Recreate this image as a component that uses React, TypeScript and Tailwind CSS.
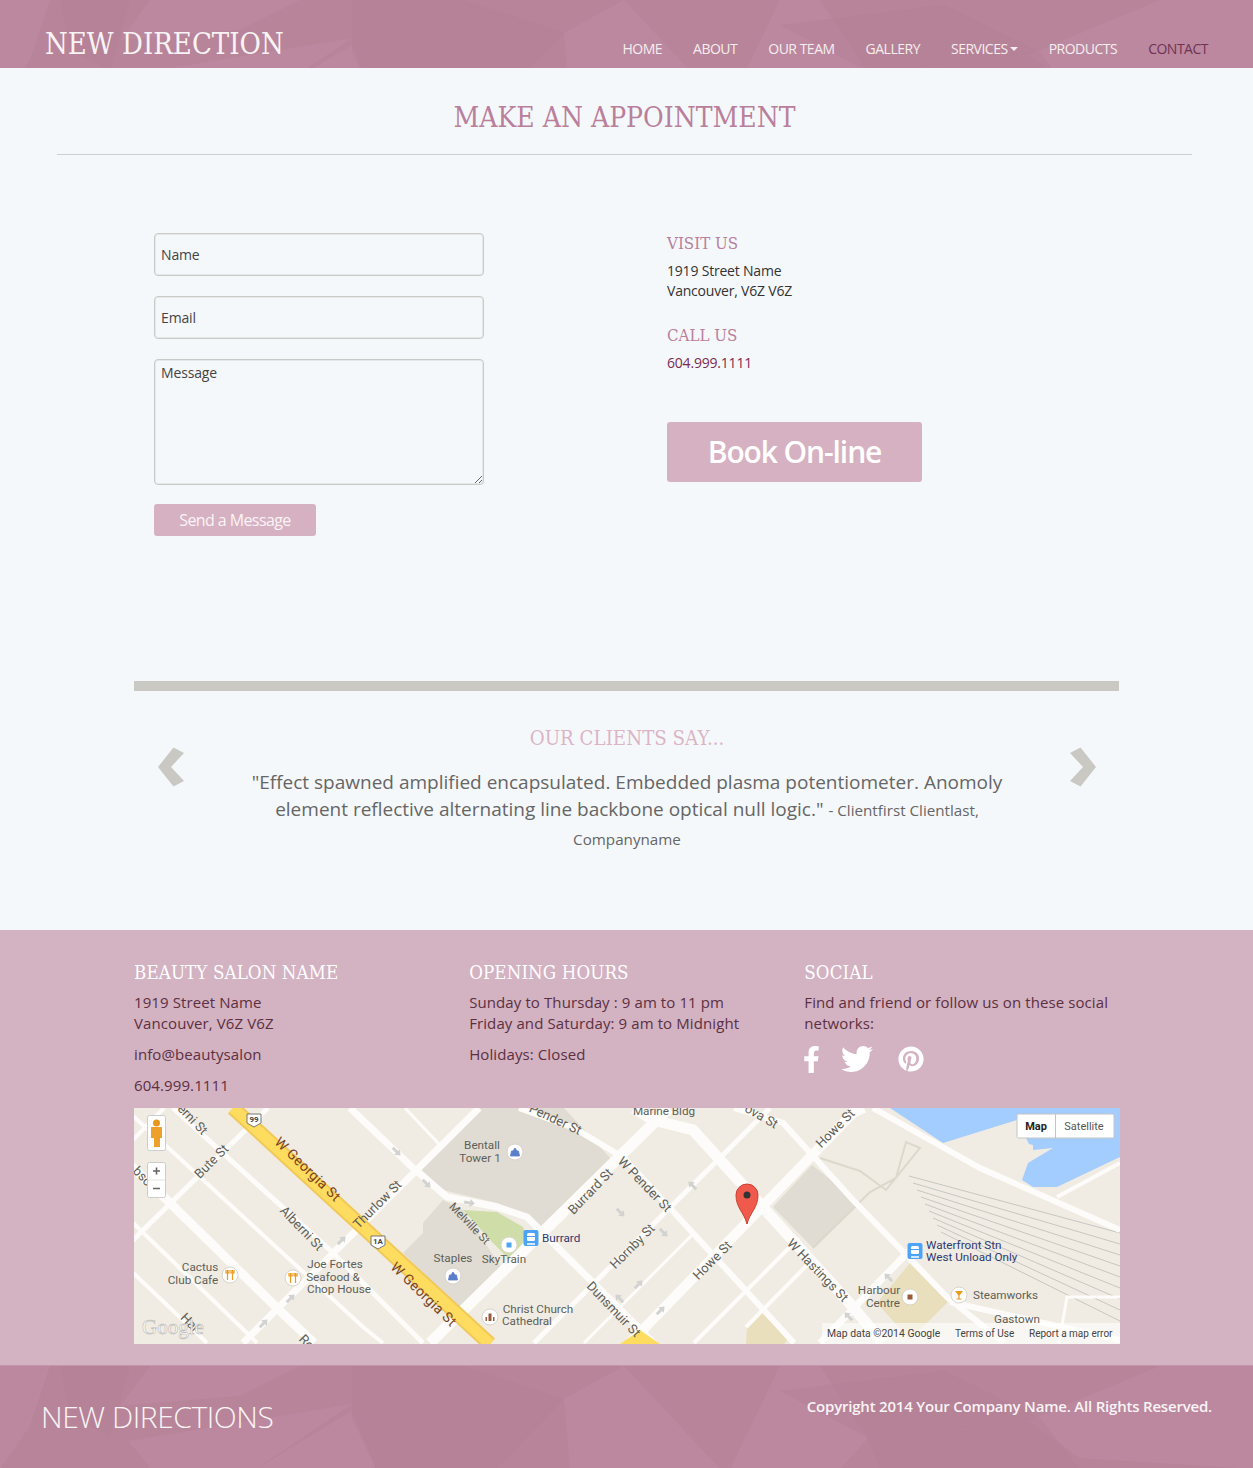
import { FaFacebookF, FaTwitter, FaPinterest } from 'react-icons/fa';

const slab = 'font-["DejaVu_Serif",serif] font-stretch-condensed';

// faceted backdrop shared by the top bar and the bottom band
const LIGHT = [
  '0,0 50,0 30,60 0,103',
  '128,75 352,38 256,103 152,103',
  '352,45 376,103 256,103',
  '564,33 624,0 720,103 570,103',
  '780,0 820,0 868,72 840,103 730,103',
  '1028,55 1160,0 1253,0 1253,103 1080,92',
  '150,0 300,0 240,30 120,40',
];
const DARK = [
  '60,0 130,0 110,70 70,50',
  '352,0 464,0 564,33 496,103 376,103 352,52',
  '780,25 944,5 1040,52 868,72',
  '868,72 1040,52 1080,103 880,103',
];

function Facets() {
  return (
    <svg className="absolute inset-0 h-full w-full" viewBox="0 0 1253 103" preserveAspectRatio="xMidYMin slice">
      {LIGHT.map((p) => <polygon key={p} points={p} fill="#c08da5" opacity="0.55" />)}
      {DARK.map((p) => <polygon key={p} points={p} fill="#b27f94" opacity="0.35" />)}
    </svg>
  );
}

function Chevron({ flip }: { flip?: boolean }) {
  return (
    <svg width="27" height="40" viewBox="0 0 27 40" className={flip ? '-scale-x-100' : ''}>
      <polygon points="15.5,0.5 26,6 13,20 26,34 15.5,39.5 0,20" fill="#c9c8c3" />
    </svg>
  );
}

const ROADS: [string, number][] = [
  ['-64,0 33,92 143,200 180,235', 9],
  ['-10,0 29,35 229,219 249,235', 4],
  ['39,0 196,142 289,235', 5],
  ['-4,112 113,225 123,235', 4],
  ['-4,162 73,235', 4],
  ['109,235 345,0', 7],
  ['-4,135 134,0', 5],
  ['-4,35 30,0', 4],
  ['216,0 279,60 313,89 363,99 393,109 409,125 520,235', 7],
  ['271,0 305,36', 3],
  ['296,235 535,0', 11],
  ['400,235 636,0', 5],
  ['495,236 719,5 730,0', 10],
  ['612,219 680,150', 4],
  ['686,235 776,142', 7],
  ['385,0 440,20 490,50 660,235', 6],
  ['500,0 519,12 559,22 719,199 749,235', 11],
  ['600,0 649,15 719,92 813,189 870,235', 6],
  ['739,0 846,60 986,122', 6],
  ['816,194 986,232', 6],
  ['923,89 986,55', 4],
  ['925,235 933,189 986,189', 3],
  ['560,235 665,130', 4],
  ['450,235 560,125', 3],
];

const ARROWS: [number, number, number][] = [
  [263, 44, 225], [293, 76, 225], [336, 95, 190], [208, 132, 135], [157, 190, 135],
  [130, 215, 135], [487, 105, 225], [558, 77, 45], [485, 190, 45], [530, 125, 225],
  [505, 176, 135], [527, 202, 135], [754, 169, 45], [714, 208, 45],
];

// [text, x, y, rotation]
const STREETS: [string, number, number, number][] = [
  ['erni St', 58, 12, 46], ['Bute St', 78, 54, -45], ['Alberni St', 167, 121, 46], ['bso', 8, 69, 46],
  ['Thurlow St', 244, 97, -45], ['Pender St', 421, 12, 25],
  ['ova St', 627, 9, 30], ['Howe St', 702, 21, -45], ['Burrard St', 457, 84, -46],
  ['W Pender St', 510, 77, 46], ['Hornby St', 499, 139, -45],
  ['Howe St', 579, 153, -45], ['W Hastings St', 683, 163, 46], ['Dunsmuir St', 479, 202, 46],
  ['Hal', 55, 215, 46], ['Ro', 172, 235, 46],
];

const PLACES: [string, number, number][] = [
  ['Marine Bldg', 530, 4], ['Cactus', 66, 160], ['Club Cafe', 59, 173], ['Joe Fortes', 201, 157],
  ['Seafood &', 199, 170], ['Chop House', 205, 182], ['Bentall', 348, 38], ['Tower 1', 346, 51],
  ['Staples', 319, 151], ['SkyTrain', 370, 152], ['Christ Church', 404, 202], ['Cathedral', 393, 214],
  ['Harbour', 745, 183], ['Centre', 749, 196], ['Gastown', 883, 212],
];

function Poi({ x, y, kind }: { x: number; y: number; kind: 'food' | 'shop' | 'dot' | 'church' | 'box' | 'bar' }) {
  return (
    <g transform={`translate(${x} ${y})`}>
      <circle r="8" fill="#fff" stroke="#d8d4ca" />
      {kind === 'food' && <path d="M-2.5 -5v10M2.5 -5v10M-4 -5v3h3v-3M1 -5v3h3v-3" stroke="#ee9a1c" strokeWidth="1.2" fill="none" />}
      {kind === 'shop' && <path d="M-4.5 4L-3.5 -1H3.5L4.5 4ZM-2 -1L0 -4L2 -1" fill="#5b7fc9" stroke="#5b7fc9" strokeWidth="0.8" />}
      {kind === 'dot' && <rect x="-2.5" y="-2.5" width="5" height="5" fill="#4da3f5" />}
      {kind === 'church' && <path d="M-4.5 4V0H-3V4ZM-1.5 4V-3.5H1.5V4ZM3 4V0H4.5V4Z" fill="#9a5a3a" />}
      {kind === 'box' && <rect x="-2.5" y="-2.5" width="5" height="5" fill="#9a5a3a" />}
      {kind === 'bar' && <path d="M-4 -4H4L0.6 0.5V3.5H2.5V4.5H-2.5V3.5H-0.6V0.5Z" fill="#ee9a1c" />}
    </g>
  );
}

function Transit({ x, y }: { x: number; y: number }) {
  return (
    <g>
      <rect x={x - 7.5} y={y - 8} width="15" height="16" rx="2" fill="#4da3f5" />
      <rect x={x - 4} y={y - 5} width="8" height="8" rx="1.5" fill="#fff" />
      <path d={`M${x - 4} ${y - 1.5}h8`} stroke="#4da3f5" strokeWidth="1" />
      <path d={`M${x - 4} ${y + 6}h8`} stroke="#fff" strokeWidth="1.5" />
    </g>
  );
}

function CityMap() {
  return (
    <svg width="986" height="236" viewBox="0 0 986 236" className="block font-['Roboto',sans-serif]">
      <rect width="986" height="236" fill="#f0ece3" />
      <polygon points="756,0 809,35 883,12 895,36 899,37 899,42 919,40 894,55 888,72 899,79 923,79 986,49 986,0" fill="#a3ccff" />
      <polygon points="343,0 286,60 309,82 363,95 393,109 408,122 478,52 430,0" fill="#e0dcd3" />
      <polygon points="309,92 289,115 289,125 269,145 326,202 369,162 329,102" fill="#e0dcd3" />
      <polygon points="329,102 363,104 389,119 393,129 376,152 359,135" fill="#cfdea8" />
      <polygon points="678,57 726,95 679,140 639,99" fill="#e0dcd3" />
      <polygon points="776,155 814,194 776,232 743,195" fill="#e9dfbd" />
      <polygon points="631,202 656,229 650,236 612,236 613,219" fill="#e9dfbd" />

      {[0, 1, 2, 3, 4, 5, 6, 7, 8].map((i) => (
        <line key={i} x1={775 + i * 4} y1={68 + i * 7} x2="986" y2={125 + i * 11} stroke="#c6c6c1" strokeWidth="1" />
      ))}
      <polyline points="686,50 726,63 752,82 786,40 772,34 762,70 736,84 679,140" fill="none" stroke="#dcd8cc" strokeWidth="2" />

      {ROADS.map(([pts, w]) => (
        <polyline key={pts} points={pts} fill="none" stroke="#fdfcfa" strokeWidth={w} />
      ))}

      <line x1="99" y1="0" x2="356" y2="236" stroke="#f0c95a" strokeWidth="15" />
      <line x1="99" y1="0" x2="356" y2="236" stroke="#fedc5f" strokeWidth="11" />
      <polygon points="486,236 506,222 526,236" fill="#fedc5f" />

      {ARROWS.map(([x, y, r]) => (
        <path key={`${x}-${y}`} d="M-5 0L0 -4V-1.5H6V1.5H0V4Z" fill="#d2d2d0" transform={`translate(${x} ${y}) rotate(${r})`} />
      ))}

      {STREETS.map(([t, x, y, r]) => (
        <text key={`${t}-${x}`} x={x} y={y} textAnchor="middle" dominantBaseline="middle" fontSize="13" fill="#5f5f58" transform={`rotate(${r} ${x} ${y})`}>{t}</text>
      ))}
      <text x="335" y="116" textAnchor="middle" dominantBaseline="middle" fontSize="11.5" fill="#5f5f58" transform="rotate(46 335 116)">Melville St</text>
      {PLACES.map(([t, x, y]) => (
        <text key={t} x={x} y={y} textAnchor="middle" dominantBaseline="middle" fontSize="11.7" fill="#5f5f58">{t}</text>
      ))}
      <text x="173" y="62" textAnchor="middle" dominantBaseline="middle" fontSize="14" letterSpacing="0.4" fill="#7a4420" transform="rotate(44 173 62)">W Georgia St</text>
      <text x="289" y="187" textAnchor="middle" dominantBaseline="middle" fontSize="14" letterSpacing="0.4" fill="#7a4420" transform="rotate(44 289 187)">W Georgia St</text>

      <g>
        <path d="M113 6h14v9l-7 4l-7-4z" fill="#fff" stroke="#777" />
        <text x="120" y="14" textAnchor="middle" fontSize="8" fontWeight="700" fill="#444">99</text>
        <path d="M237 128h14v9l-7 4l-7-4z" fill="#fff" stroke="#777" />
        <text x="244" y="136" textAnchor="middle" fontSize="8" fontWeight="700" fill="#444">1A</text>
      </g>

      <Poi x={96} y={167} kind="food" />
      <Poi x={159} y={170} kind="food" />
      <Poi x={381} y={44} kind="shop" />
      <Poi x={319} y={168} kind="shop" />
      <Poi x={375} y={137} kind="dot" />
      <Poi x={356} y={209} kind="church" />
      <Poi x={776} y={189} kind="box" />
      <Poi x={825} y={187} kind="bar" />
      <Transit x={397} y={130} />
      <Transit x={781} y={143} />
      <text x="408" y="134" fontSize="11.7" fill="#2e3a72">Burrard</text>
      <text x="792" y="141" fontSize="11.7" fill="#2e3a72">Waterfront Stn</text>
      <text x="792" y="153" fontSize="11.7" fill="#2e3a72">West Unload Only</text>
      <text x="839" y="191" fontSize="11.7" fill="#5f5f58">Steamworks</text>

      <path d="M613 116C610 104 602 100 602 87A11 11 0 1 1 624 87C624 100 616 104 613 116Z" fill="#f05a4c" stroke="#c8402f" />
      <circle cx="613" cy="87" r="3.5" fill="#333" />

      <rect x="13.5" y="7.5" width="18" height="35" rx="2" fill="#fff" stroke="#ccc" />
      <circle cx="22.5" cy="15" r="3.5" fill="#e8961e" />
      <path d="M17 19h11v11h-2v9h-6v-9h-3z" fill="#eda02a" />
      <rect x="13.5" y="54.5" width="18" height="35" rx="2" fill="#fff" stroke="#ccc" />
      <line x1="14" y1="72" x2="31" y2="72" stroke="#e4e4e4" />
      <path d="M19 63h7M22.5 59.5v7M19 80.5h7" stroke="#666" strokeWidth="1.6" />

      <rect x="883" y="6" width="97" height="24" rx="1.5" fill="#fff" stroke="#c4c4c4" />
      <line x1="921.5" y1="6" x2="921.5" y2="30" stroke="#c4c4c4" />
      <text x="902" y="22" textAnchor="middle" fontSize="11" fontWeight="700" fill="#222">Map</text>
      <text x="950" y="22" textAnchor="middle" fontSize="11" fill="#555">Satellite</text>

      <text x="8" y="226" fontFamily="Liberation Serif, serif" fontSize="21" fill="#fff" stroke="#b5b5b5" strokeWidth="0.6" opacity="0.9">Google</text>

      <rect x="688" y="215" width="298" height="21" fill="#fff" opacity="0.6" />
      <text x="693" y="229" fontSize="10.4" fill="#444">Map data ©2014 Google</text>
      <text x="821" y="229" fontSize="10" fill="#444">Terms of Use</text>
      <text x="895" y="229" fontSize="10" fill="#444">Report a map error</text>
    </svg>
  );
}

const inputClass = 'block w-[330px] rounded-[4px] border border-[#cacac8] shadow-[inset_0_0_0_1px_#e6e7e7] bg-transparent px-[6px] text-[14px] tracking-[-0.15px] text-[#333] placeholder:text-[#444] outline-none';

export default function App() {
  return (
    <div className="w-[1253px] bg-[#f5f8fb] font-['Open_Sans',sans-serif]">
      {/* top bar */}
      <header className="relative h-[68px] overflow-hidden bg-[#b88499]">
        <Facets />
        <div className="relative flex h-full items-start justify-between pl-[45px] pr-[45px]">
          <div className={`mt-[24px] text-[29px] leading-[40px] text-[#f8f4f5] ${slab}`}>NEW DIRECTION</div>
          <nav className="mt-[39px] flex gap-[31px] text-[14px] leading-[20px] tracking-[-0.5px] text-[#f5eeee]">
            <a>HOME</a>
            <a>ABOUT</a>
            <a>OUR TEAM</a>
            <a>GALLERY</a>
            <a className="flex items-center gap-[2px]">
              SERVICES
              <span className="h-0 w-0 border-x-[4px] border-t-[4px] border-x-transparent border-t-[#f5eeee]" />
            </a>
            <a>PRODUCTS</a>
            <a className="text-[#6f3352]">CONTACT</a>
          </nav>
        </div>
      </header>

      <main className="h-[862px]">
        <div className="ml-[57px] mr-[61px] border-b border-[#cfd0ce] pb-[17px] pt-[30px] text-center">
          <h1 className={`text-[28px] leading-[39px] text-[#b9809b] ${slab}`}>MAKE AN APPOINTMENT</h1>
        </div>

        <section className="flex h-[526px] pl-[154px] pt-[78px]">
          <form className="w-[513px]">
            <input placeholder="Name" className={`${inputClass} h-[43px]`} />
            <input placeholder="Email" className={`${inputClass} mt-[20px] h-[43px]`} />
            <textarea placeholder="Message" className={`${inputClass} mt-[20px] h-[126px] py-[2px]`} />
            <button type="button" className="mt-[19px] h-[32px] w-[162px] rounded-[3px] bg-[#d6b1c1] text-[16px] tracking-[-0.6px] text-[#faf4f6]">
              Send a Message
            </button>
          </form>
          <div>
            <h3 className={`text-[16.8px] leading-[20px] text-[#b9809b] ${slab}`}>VISIT US</h3>
            <p className="mt-[8px] text-[14px] leading-[20px] tracking-[-0.2px] text-[#333]">1919 Street Name<br />Vancouver, V6Z V6Z</p>
            <h3 className={`mt-[24px] text-[16.8px] leading-[20px] text-[#b9809b] ${slab}`}>CALL US</h3>
            <p className="mt-[8px] text-[14px] leading-[20px] tracking-[-0.2px] text-[#7a2b52]">604.999.1111</p>
            <button type="button" className="mt-[49px] block h-[60px] w-[255px] rounded-[3px] bg-[#d6b1c1] pb-[2px] text-[30px] font-semibold tracking-[-1.1px] text-white">
              Book On-line
            </button>
          </div>
        </section>

        <section className="mx-[134px] border-t-[10px] border-[#c9c8c3]">
          <div className="flex items-start justify-between pl-[24px] pr-[23px] pt-[56px]">
            <Chevron />
            <div className="-mt-[24px] w-[780px] text-center text-[#666]">
              <h2 className={`text-[20.3px] leading-[30px] text-[#dbb5c5] ${slab}`}>OUR CLIENTS SAY...</h2>
              <p className="mt-[16px] text-[19px] font-medium leading-[27px]">
                "Effect spawned amplified encapsulated. Embedded plasma potentiometer. Anomoly element reflective alternating line backbone optical null logic."{' '}
                <span className="text-[15.2px] leading-[29px]">- Clientfirst Clientlast, Companyname</span>
              </p>
            </div>
            <Chevron flip />
          </div>
        </section>
      </main>

      {/* footer */}
      <footer className="bg-[#d3b2c2]">
        <div className="h-[435px] px-[134px] pt-[30px]">
          <div className="flex h-[148px] text-[15px] leading-[21px] tracking-[0.1px] text-[#5c3040]">
            <div className="w-[335.5px]">
              <h4 className={`mb-[6px] text-[18.6px] leading-[26px] text-white ${slab}`}>BEAUTY SALON NAME</h4>
              <p>1919 Street Name<br />Vancouver, V6Z V6Z</p>
              <p className="mt-[10px]">info@beautysalon</p>
              <p className="mt-[10px]">604.999.1111</p>
            </div>
            <div className="w-[335.5px]">
              <h4 className={`mb-[6px] text-[18.6px] leading-[26px] text-white ${slab}`}>OPENING HOURS</h4>
              <p>Sunday to Thursday : 9 am to 11 pm<br />Friday and Saturday: 9 am to Midnight</p>
              <p className="mt-[10px]">Holidays: Closed</p>
            </div>
            <div className="w-[315px]">
              <h4 className={`mb-[6px] text-[18.6px] leading-[26px] text-white ${slab}`}>SOCIAL</h4>
              <p>Find and friend or follow us on these social networks:</p>
              <div className="mt-[9px] flex items-center text-white">
                <FaFacebookF className="-ml-[1px] h-[27px] w-[17px]" />
                <FaTwitter className="ml-[21px] h-[32px] w-[32px]" />
                <FaPinterest className="ml-[25px] h-[26px] w-[26px]" />
              </div>
            </div>
          </div>
          <CityMap />
        </div>

        <div className="relative h-[103px] overflow-hidden border-t border-[#c296aa] bg-[#b88499]">
          <Facets />
          <div className="relative flex items-start justify-between pl-[41px] pr-[41px]">
            <div className="mt-[29px] text-[30px] font-light leading-[44px] tracking-[-0.45px] text-[#f8f4f5]">NEW DIRECTIONS</div>
            <div className="mt-[29px] text-[15px] font-semibold leading-[22px] tracking-[-0.2px] text-[#f8f4f5]">Copyright 2014 Your Company Name. All Rights Reserved.</div>
          </div>
        </div>
      </footer>
    </div>
  );
}
